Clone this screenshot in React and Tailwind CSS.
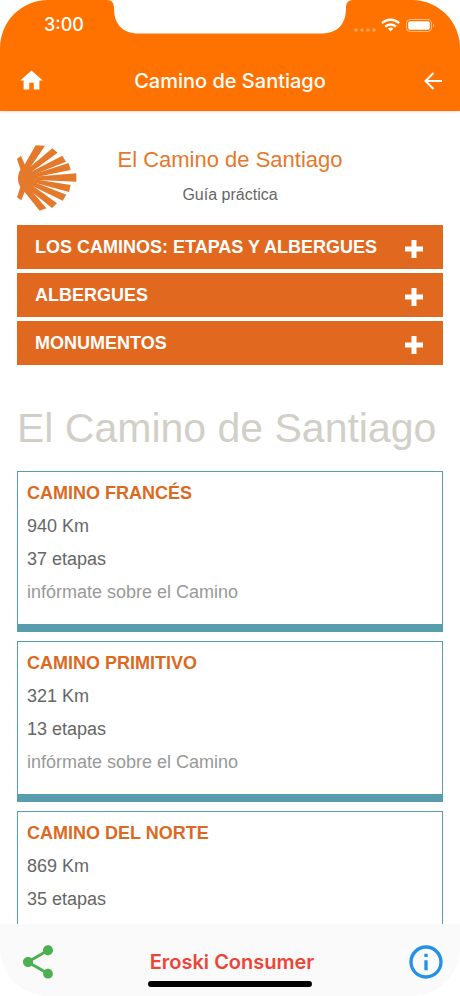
import React from 'react';
import { MdHome, MdShare, MdInfoOutline } from 'react-icons/md';

const menus = ['LOS CAMINOS: ETAPAS Y ALBERGUES', 'ALBERGUES', 'MONUMENTOS'];

const caminos = [
    { name: 'CAMINO FRANCÉS', km: 940, etapas: 37 },
    { name: 'CAMINO PRIMITIVO', km: 321, etapas: 13 },
    { name: 'CAMINO DEL NORTE', km: 869, etapas: 35 },
];

const Notch = () => (
    <svg className="absolute top-0 left-1/2 -translate-x-1/2" width="246" height="34" viewBox="0 0 246 34" fill="#fff" aria-hidden="true">
        <path d="M0 0C5 0 7 3 7 8C7 24 15 33.500 32 33.500H214C231 33.500 239 24 239 8C239 3 241 0 246 0Z" />
    </svg>
);

const StatusIcons = () => (
    <svg width="84" height="16" viewBox="0 0 84 16" fill="#fff" aria-hidden="true">
        <g opacity="0.35">
            <circle cx="4" cy="13" r="1.800" />
            <circle cx="10" cy="13" r="1.800" />
            <circle cx="16" cy="13" r="1.800" />
            <circle cx="22" cy="13" r="1.800" />
        </g>
        <g fill="none" stroke="#fff" strokeWidth="2.400">
            <path d="M30 6.200C34.800 1.500 42.400 1.500 47.200 6.200" />
            <path d="M33.200 9.600C36.200 6.700 41 6.700 44 9.600" />
        </g>
        <path d="M35.800 11.600C37.300 10.200 39.900 10.200 41.400 11.600L38.600 14.500Z" />
        <rect x="54.500" y="2.500" width="25" height="12" rx="3.500" fill="none" stroke="#fff" strokeOpacity="0.5" />
        <rect x="56.200" y="4.200" width="21.600" height="8.600" rx="1.800" />
        <path d="M81 6.500C82.600 7.100 82.600 9.900 81 10.500Z" opacity="0.6" />
    </svg>
);

const Shell = () => (
    <svg width="60" height="66" viewBox="51 45 180 198" fill="#e5792b" role="img" aria-label="Concha">
        <path d="M73 107C88 112 98 124 101 138V150C97 166 88 177 74 182C62 176 54 163 54 145C54 128 62 113 73 107Z" />
        <path d="M51 87L63 77L77 110L62 120Z" />
        <path d="M51 202L64 211L77 178L62 168Z" />
        <path d="M107 46L135 47L86 119L70 110Z" />
        <path d="M157 55L173 68L93 127L82 118Z" />
        <path d="M187 77L198 95L97 136L91 127Z" />
        <path d="M206 99L212 120L99 143L96 134Z" />
        <path d="M229 130V155L99 149V140Z" />
        <path d="M212 165L207 186L96 156L99 147Z" />
        <path d="M199 194L188 212L90 164L96 154Z" />
        <path d="M171 220L156 234L81 174L91 162Z" />
        <path d="M139 235L119 242L69 180L84 170Z" />
    </svg>
);

const MenuRow = ({ label }) => (
    <button type="button" className="flex h-11 w-full items-center justify-between bg-[#e0691f] pr-5 pl-[18px] text-left text-lg font-bold text-white">
        <span>{label}</span>
        <svg className="mt-1" width="18" height="18" viewBox="0 0 18 18" fill="#fff" aria-hidden="true">
            <path d="M6.500 0H11.500V6.500H18V11.500H11.500V18H6.500V11.500H0V6.500H6.500Z" />
        </svg>
    </button>
);

const CaminoCard = ({ name, km, etapas }) => (
    <article className="h-[161px] shrink-0 border border-b-8 border-[#589dab] px-[9px] pt-[5px] text-lg leading-[33px] text-[#666]">
        <h3 className="font-bold text-[#dc691f]">{name}</h3>
        <p>{km} Km</p>
        <p>{etapas} etapas</p>
        <a href="#info" className="block text-[#999]">infórmate sobre el Camino</a>
    </article>
);

export default function App() {
    return (
        <div className="bg-white">
            <div className="flex h-screen flex-col overflow-hidden rounded-[48px] bg-white font-['Liberation_Sans',Arial,sans-serif]">
                <header className="relative z-10 shrink-0 bg-[#ff7200] font-['Inter',sans-serif] text-white shadow">
                    <Notch />
                    <div className="flex h-[50px] items-center justify-between pr-6 pl-11">
                        <span className="text-lg font-medium">3:00</span>
                        <StatusIcons />
                    </div>
                    <div className="flex h-[61px] items-center justify-between px-[18px]">
                        <button type="button" aria-label="Inicio"><MdHome size={27} /></button>
                        <h1 className="text-xl font-medium">Camino de Santiago</h1>
                        <button type="button" aria-label="Volver" className="flex w-[27px] justify-end">
                            <svg width="18" height="18" viewBox="0 0 18 18" fill="none" stroke="#fff" strokeWidth="2">
                                <path d="M18 9H2M9.500 1L1.500 9L9.500 17" />
                            </svg>
                        </button>
                    </div>
                </header>

                <main className="min-h-0 flex-1 overflow-y-auto px-[17px] pt-[34px] [scrollbar-width:none]">
                    <div className="flex items-start">
                        <Shell />
                        <div className="flex-1 pr-[60px] text-center">
                            <h2 className="text-[22px] leading-[30px] text-[#e5792b]">El Camino de Santiago</h2>
                            <p className="pt-2 text-base text-[#666]">Guía práctica</p>
                        </div>
                    </div>

                    <nav className="mt-3.5 flex flex-col gap-1">
                        {menus.map((label) => (
                            <MenuRow key={label} label={label} />
                        ))}
                    </nav>

                    <h2 className="mt-[38px] mb-[18px] text-[41px] leading-[50px] whitespace-nowrap text-[#d1cfc8]">El Camino de Santiago</h2>

                    <div className="flex flex-col gap-[9px]">
                        {caminos.map((camino) => (
                            <CaminoCard key={camino.name} {...camino} />
                        ))}
                    </div>
                </main>

                <footer className="relative flex h-[72px] shrink-0 items-center justify-between bg-[#fafafa] pr-[14px] pl-[18px] pt-1 font-['Inter',sans-serif]">
                    <button type="button" aria-label="Compartir"><MdShare size={40} color="#4caf50" /></button>
                    <a href="#eroski" className="text-xl font-semibold text-[#ec4537]">Eroski Consumer</a>
                    <button type="button" aria-label="Información"><MdInfoOutline size={40} color="#2490ea" /></button>
                    <span className="absolute bottom-[9px] left-1/2 h-1.5 w-[164px] -translate-x-1/2 rounded-full bg-black" />
                </footer>
            </div>
        </div>
    );
}
